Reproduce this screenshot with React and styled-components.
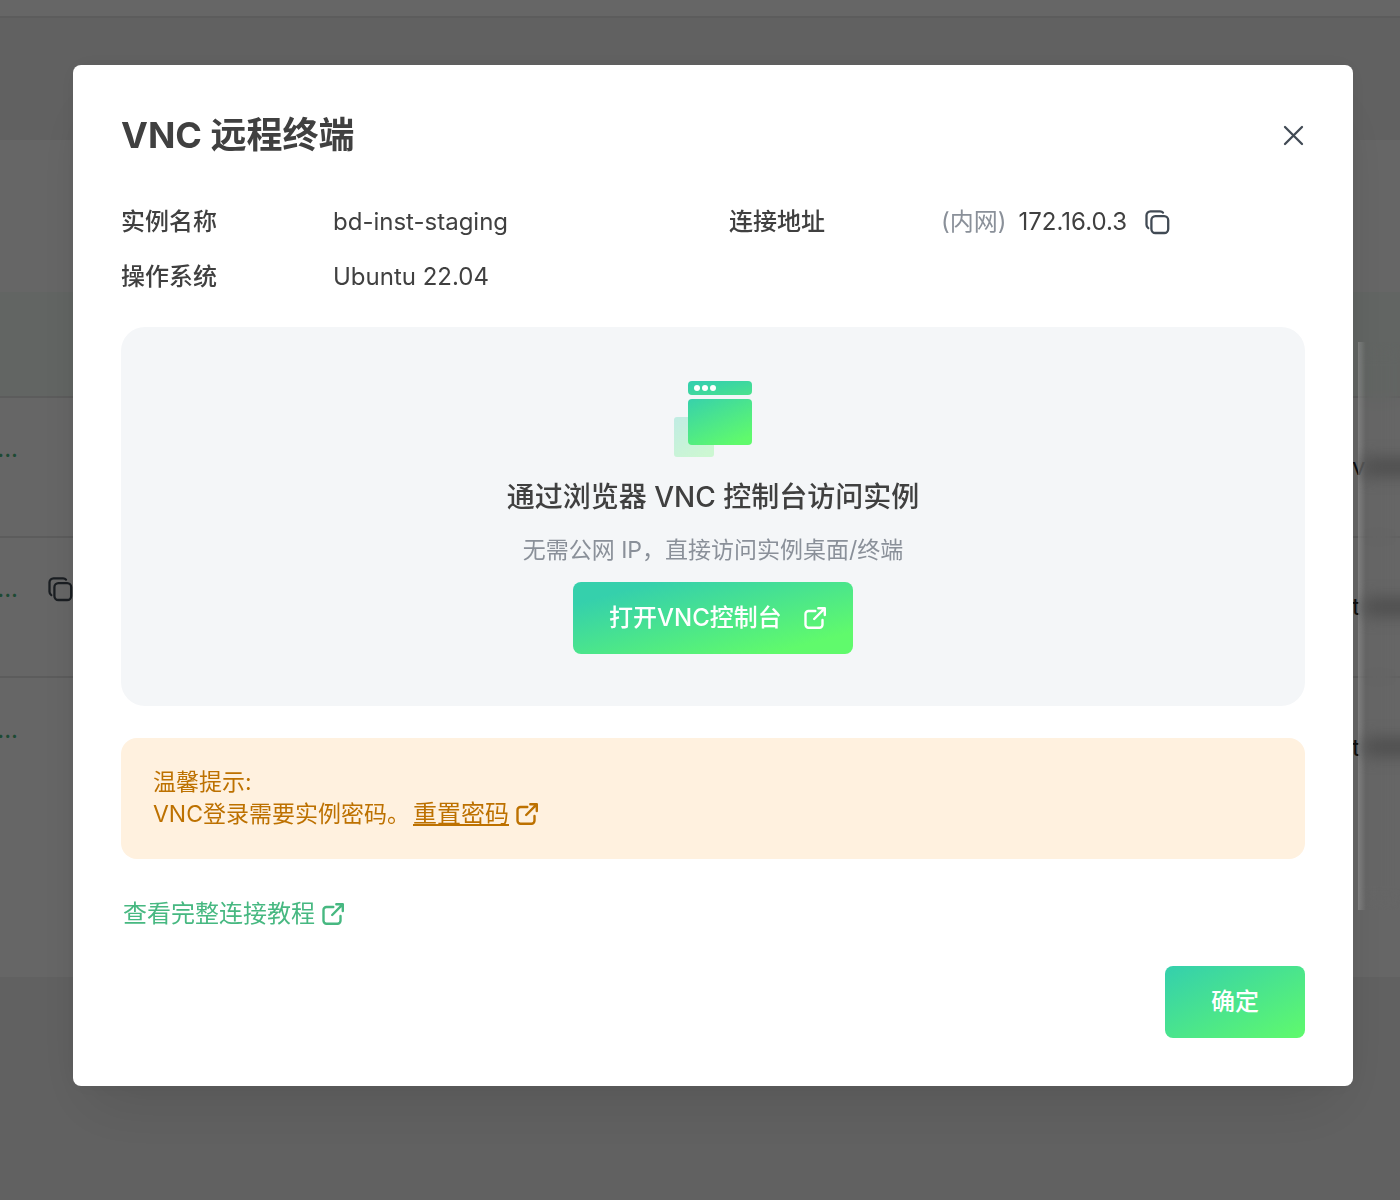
import React from 'react';
import styled, { createGlobalStyle } from 'styled-components';

const GlobalStyle = createGlobalStyle`
  * {
    box-sizing: border-box;
  }

  body {
    margin: 0;
    color: #404040;
    font-family: Inter, 'Noto Sans CJK SC', sans-serif;
    font-size: 24px;
    line-height: 32px;
  }
`;

const INFO = [
  { label: '实例名称', value: 'bd-inst-staging' },
  { label: '连接地址', prefix: '(内网)', value: '172.16.0.3', copy: true },
  { label: '操作系统', value: 'Ubuntu 22.04' },
];

const ROWS = [
  { id: '1', name: '...', spec: 'v' },
  { id: '2', name: '...', spec: 't', copy: true },
  { id: '3', name: '...', spec: 't' },
];

const Page = styled.div`
  min-height: 100vh;
  background: #f2f2f2;
  overflow: hidden;
`;

const TopBar = styled.div`
  height: 18px;
  background: #fff;
  border-bottom: 2px solid #e5e5e5;
`;

const Card = styled.div`
  height: 837px;
  margin-top: 122px;
  padding-top: 152px;
  background: #fff;
`;

const InstanceTable = styled.table`
  width: 100%;
  border-collapse: collapse;

  th {
    height: 105px;
    padding: 0;
    background: #f4fcf8;
    border-bottom: 2px solid #e5e5e5;
  }

  td {
    height: 140px;
    padding: 0;
    border-bottom: 2px solid #e5e5e5;
  }

  tr:last-child td {
    border-bottom: none;
  }
`;

const NameCell = styled.div`
  display: flex;
  align-items: center;
  justify-content: space-between;
  width: 73px;
  padding-bottom: 36px;
  color: #4ab87f;
`;

const Name = styled.span`
  display: flex;
  justify-content: flex-end;
  width: 18px;
`;

const SpecCell = styled.div`
  width: 48px;
  margin-left: auto;
  color: #262626;
`;

const BlurStrip = styled.div`
  position: fixed;
  top: 342px;
  right: 0;
  width: 42px;
  height: 568px;
  z-index: 3;
  overflow: hidden;
  background: linear-gradient(
    90deg,
    rgba(255, 255, 255, 0.18),
    rgba(255, 255, 255, 0) 8px
  );
  backdrop-filter: blur(10px);
`;

const Smudge = styled.span`
  position: absolute;
  top: ${(props) => props.$top}px;
  left: 6px;
  width: 60px;
  height: 18px;
  background: #4e4e4e;
  filter: blur(8px);
`;

const Mask = styled.div`
  position: fixed;
  inset: 0;
  z-index: 2;
  display: flex;
  align-items: flex-start;
  padding: 65px 47px 65px 73px;
  background: rgba(0, 0, 0, 0.6);
`;

const Dialog = styled.section`
  flex: 1;
  padding: 48px;
  background: #fff;
  border-radius: 8px;
  box-shadow:
    0 32px 60px -12px rgba(0, 0, 0, 0.1),
    0 0 24px rgba(0, 0, 0, 0.06);
`;

const Header = styled.header`
  display: flex;
  align-items: center;
  justify-content: space-between;
`;

const Title = styled.h1`
  margin: 0;
  font-size: 36px;
  font-weight: 700;
  line-height: 44px;
`;

const IconButton = styled.button`
  display: flex;
  padding: 0;
  color: #414a54;
  background: none;
  border: none;
  cursor: pointer;
`;

const InfoGrid = styled.dl`
  display: grid;
  grid-template-columns: 1fr 1fr;
  gap: 23px 32px;
  margin: 49px 0 34px;
`;

const InfoItem = styled.div`
  display: flex;
  align-items: center;

  dt {
    width: 212px;
    font-weight: 500;
  }

  dd {
    display: flex;
    align-items: center;
    margin: 0;
  }
`;

const Prefix = styled.span`
  margin-right: 12px;
  color: #8a9099;
`;

const CopyButton = styled(IconButton)`
  margin-left: 18px;
`;

const Panel = styled.div`
  display: flex;
  flex-direction: column;
  align-items: center;
  padding: 54px 24px 52px;
  background: #f4f6f8;
  border-radius: 24px;
`;

const PanelTitle = styled.h2`
  margin: 20px 0 0;
  font-size: 28px;
  font-weight: 500;
  line-height: 40px;
`;

const PanelHint = styled.p`
  margin: 17px 0 16px;
  color: #8a9099;
  font-size: 23px;
`;

const GradientButton = styled.button`
  display: flex;
  align-items: center;
  justify-content: ${(props) => (props.$wide ? 'space-between' : 'center')};
  width: ${(props) => (props.$wide ? 280 : 140)}px;
  height: 72px;
  padding: ${(props) => (props.$wide ? '0 27px 0 36px' : '0')};
  color: #fff;
  font: inherit;
  font-weight: 500;
  background: linear-gradient(
    ${(props) => (props.$wide ? 165 : 152)}deg,
    #35d0ac ${(props) => (props.$wide ? 15 : 2)}%,
    #60fa6c ${(props) => (props.$wide ? 85 : 100)}%
  );
  border: none;
  border-radius: 8px;
  cursor: pointer;
`;

const Notice = styled.div`
  margin-top: 32px;
  padding: 28px 32px 29px;
  color: #bd7100;
  font-size: 23px;
  background: #fff1df;
  border-radius: 16px;

  p {
    display: flex;
    align-items: center;
    gap: 3px;
    margin: 0;
  }
`;

const ResetLink = styled.a`
  display: flex;
  align-items: center;
  gap: 7px;
  color: inherit;
  font-size: 24px;
  text-decoration: none;

  span {
    text-decoration: underline;
    text-decoration-thickness: 2px;
    text-underline-offset: 2px;
  }
`;

const GuideLink = styled.a`
  display: inline-flex;
  align-items: center;
  gap: 7px;
  margin: 39px 0 36px 2px;
  color: #47b881;
  text-decoration: none;
`;

const Footer = styled.footer`
  display: flex;
  justify-content: flex-end;
`;

function CopyIcon() {
  return (
    <svg width="25" height="25" viewBox="0 0 25 25" fill="none" stroke="currentColor" strokeWidth="2.3" strokeLinecap="round">
      <path d="M18 2.6C17.3 1.7 16.3 1.3 15.1 1.3H5.5a4 4 0 0 0-4 4v9.5c0 1.3.7 2.6 1.8 3.3" />
      <rect x="6.4" y="6.2" width="16.8" height="16.8" rx="4" />
    </svg>
  );
}

function ExternalIcon() {
  return (
    <svg width="22" height="22" viewBox="0 0 22 22" fill="none" stroke="currentColor" strokeWidth="2.4" strokeLinecap="round" strokeLinejoin="round">
      <path d="M11.3 4H4.5a3 3 0 0 0-3 3v10.8a3 3 0 0 0 3 3h11a3 3 0 0 0 3-3V13" />
      <path d="M14.3 1.3H20.8V8M20.4 1.7 10.2 12" />
    </svg>
  );
}

function CloseIcon() {
  return (
    <svg width="24" height="24" viewBox="0 0 24 24" fill="none" stroke="currentColor" strokeWidth="2.3" strokeLinecap="round">
      <path d="M4 4l17 17M21 4L4 21" />
    </svg>
  );
}

function BrowserIcon() {
  return (
    <svg width="78" height="76" viewBox="0 0 78 76">
      <defs>
        <linearGradient id="bar" x1="0" y1="0" x2="1" y2="1">
          <stop offset="0.15" stopColor="#35d0ac" />
          <stop offset="1" stopColor="#4be38c" />
        </linearGradient>
        <linearGradient id="win" x1="0.05" y1="0" x2="0.7" y2="1">
          <stop offset="0" stopColor="#38d2aa" />
          <stop offset="1" stopColor="#60fa6c" />
        </linearGradient>
      </defs>
      <rect y="36" width="40" height="40" rx="3" fill="url(#win)" opacity="0.27" />
      <rect x="14" width="64" height="14" rx="4" fill="url(#bar)" />
      <rect x="14" y="18" width="64" height="46" rx="4" fill="url(#win)" />
      <g fill="#fff">
        <circle cx="23" cy="7" r="3" />
        <circle cx="31" cy="7" r="3" />
        <circle cx="39" cy="7" r="3" />
      </g>
    </svg>
  );
}

export default function App() {
  return (
    <>
      <GlobalStyle />
      <Page>
        <TopBar />
        <Card>
          <InstanceTable>
            <thead>
              <tr>
                <th />
                <th />
              </tr>
            </thead>
            <tbody>
              {ROWS.map((row) => (
                <tr key={row.id}>
                  <td>
                    <NameCell>
                      <Name>{row.name}</Name>
                      {row.copy && (
                        <IconButton aria-label="复制">
                          <CopyIcon />
                        </IconButton>
                      )}
                    </NameCell>
                  </td>
                  <td>
                    <SpecCell>{row.spec}</SpecCell>
                  </td>
                </tr>
              ))}
            </tbody>
          </InstanceTable>
        </Card>
      </Page>
      <Mask>
        <Dialog role="dialog" aria-labelledby="vnc-title">
          <Header>
            <Title id="vnc-title">VNC 远程终端</Title>
            <IconButton aria-label="关闭">
              <CloseIcon />
            </IconButton>
          </Header>
          <InfoGrid>
            {INFO.map((item) => (
              <InfoItem key={item.label}>
                <dt>{item.label}</dt>
                <dd>
                  {item.prefix && <Prefix>{item.prefix}</Prefix>}
                  {item.value}
                  {item.copy && (
                    <CopyButton aria-label="复制">
                      <CopyIcon />
                    </CopyButton>
                  )}
                </dd>
              </InfoItem>
            ))}
          </InfoGrid>
          <Panel>
            <BrowserIcon />
            <PanelTitle>通过浏览器 VNC 控制台访问实例</PanelTitle>
            <PanelHint>无需公网 IP，直接访问实例桌面/终端</PanelHint>
            <GradientButton $wide>
              打开VNC控制台
              <ExternalIcon />
            </GradientButton>
          </Panel>
          <Notice>
            <p>温馨提示:</p>
            <p>
              VNC登录需要实例密码。
              <ResetLink href="#reset">
                <span>重置密码</span>
                <ExternalIcon />
              </ResetLink>
            </p>
          </Notice>
          <GuideLink href="#guide">
            查看完整连接教程
            <ExternalIcon />
          </GuideLink>
          <Footer>
            <GradientButton>确定</GradientButton>
          </Footer>
        </Dialog>
      </Mask>
      <BlurStrip>
        <Smudge $top={116} />
        <Smudge $top={256} />
        <Smudge $top={396} />
      </BlurStrip>
    </>
  );
}
